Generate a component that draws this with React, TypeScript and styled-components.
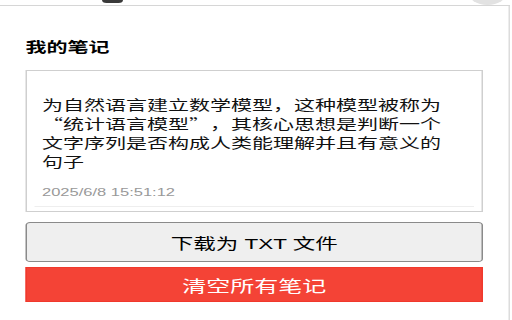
import * as React from 'react';
import styled, { createGlobalStyle } from 'styled-components';

// the reference is stretched sideways; lay out at 1/1.5 width and scale back
const STRETCH = 1.5;

const GlobalStyle = createGlobalStyle`
  html, body {
    margin: 0;
    padding: 0;
    background: #fff;
    overflow: hidden;
  }
  body {
    font-family: "Liberation Sans", "Noto Sans CJK SC", sans-serif;
  }
`;

const Stage = styled.div`
  width: ${512 / STRETCH}px;
  height: 320px;
  transform: scaleX(${STRETCH});
  transform-origin: 0 0;
  overflow: hidden;
`;

const TopStrip = styled.div`
  display: flex;
  height: 5px;
  width: 340px;
  overflow: hidden;
  border-bottom: 1px solid #d6d6d6;
`;

const Handle = styled.div`
  width: 14px;
  height: 3px;
  margin-left: 68px;
  background: #3a3a3a;
  border-radius: 0 0 7px 7px;
`;

const Knob = styled.div`
  width: 26px;
  height: 26px;
  margin: -21px 2px 0 auto;
  border-radius: 50%;
  background: #e2e2e2;
`;

const Popup = styled.div`
  box-sizing: border-box;
  width: 340px;
  height: 314px;
  padding: 31px 17px 0;
  border-right: 1px solid #dcdcdc;
`;

const Title = styled.h3`
  margin: 0 0 12px;
  font-size: 14px;
  line-height: 21px;
  font-weight: 700;
  color: #000;
`;

const NotesBox = styled.div`
  border: 1px solid #cfcfcf;
  padding: 5px 5px 4px;
`;

const NoteItem = styled.div`
  padding: 8px 18px 6px 5px;
  border-bottom: 1px solid #eee;
`;

const NoteText = styled.p`
  margin: 11px 0 13px;
  font-family: "Noto Sans CJK SC", sans-serif;
  font-size: 14px;
  line-height: 19px;
  color: #111;
  text-spacing-trim: space-all;
`;

const NoteTime = styled.div`
  font-size: 11px;
  line-height: 16px;
  color: #999;
`;

const ActionButton = styled.button<{ $danger?: boolean }>`
  display: block;
  box-sizing: border-box;
  width: 100%;
  padding: 0;
  font-family: inherit;
  cursor: pointer;
  text-align: center;
  margin-top: ${(p) => (p.$danger ? 5 : 10)}px;
  height: ${(p) => (p.$danger ? 35 : 40)}px;
  font-size: ${(p) => (p.$danger ? 16 : 15)}px;
  color: ${(p) => (p.$danger ? '#fff' : '#000')};
  background: ${(p) => (p.$danger ? '#f44336' : '#efefef')};
  border: 1px solid ${(p) => (p.$danger ? '#f0392c' : '#8a8a8a')};
  border-radius: ${(p) => (p.$danger ? 0 : 3)}px;
`;

const notes = [
  {
    text: '为自然语言建立数学模型，这种模型被称为“统计语言模型”，其核心思想是判断一个文字序列是否构成人类能理解并且有意义的句子',
    time: '2025/6/8 15:51:12',
  },
];

export default function App() {
  return (
    <>
      <GlobalStyle />
      <Stage lang="zh-CN">
        <TopStrip>
          <Handle />
          <Knob />
        </TopStrip>
        <Popup>
          <Title>我的笔记</Title>
          <NotesBox>
            {notes.map((n) => (
              <NoteItem key={n.time}>
                <NoteText>{n.text}</NoteText>
                <NoteTime>{n.time}</NoteTime>
              </NoteItem>
            ))}
          </NotesBox>
          <ActionButton>下载为 TXT 文件</ActionButton>
          <ActionButton $danger>清空所有笔记</ActionButton>
        </Popup>
      </Stage>
    </>
  );
}
